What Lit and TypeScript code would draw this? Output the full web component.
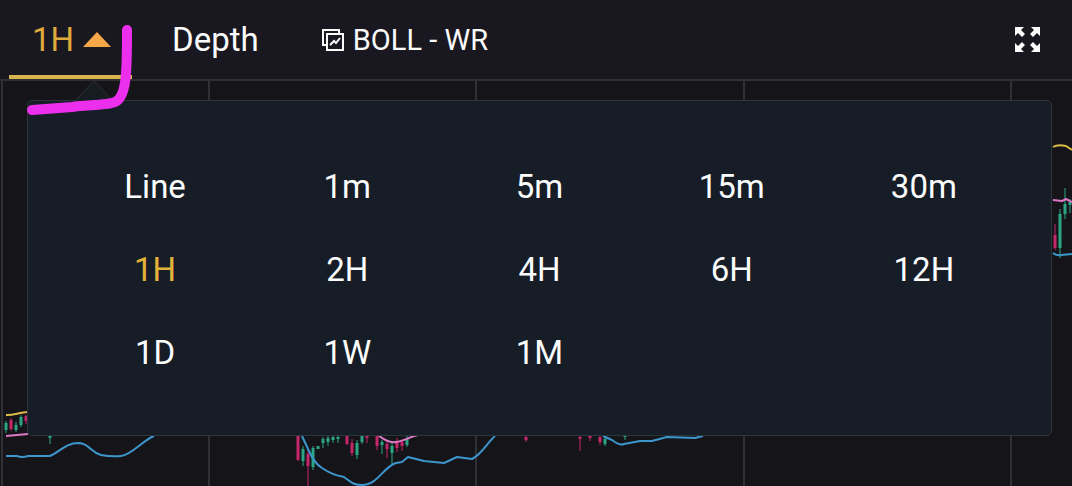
import { LitElement, css, html, svg } from 'lit';
import { customElement, property, state } from 'lit/decorators.js';
import { classMap } from 'lit/directives/class-map.js';

// x, wick top, wick bottom, body top, body bottom, rising
type Candle = [number, number, number, number, number, boolean];

const CANDLES: Candle[] = [
  [6, 421, 433, 423, 430, true],
  [11, 418, 431, 420, 429, false],
  [16, 422, 432, 425, 430, true],
  [21, 415, 427, 417, 425, true],
  [26, 415, 424, 416, 421, false],
  [50, 436, 444, 436, 438, true],
  [298, 436, 461, 436, 460, false],
  [303, 446, 466, 449, 461, true],
  [308, 450, 486, 454, 466, false],
  [313, 446, 470, 448, 467, true],
  [318, 446, 449, 446, 449, true],
  [323, 437, 448, 439, 443, true],
  [328, 436, 446, 438, 442, true],
  [333, 436, 443, 437, 440, true],
  [338, 436, 443, 437, 439, true],
  [347, 436, 445, 436, 444, false],
  [352, 439, 456, 443, 453, false],
  [357, 440, 459, 443, 455, true],
  [362, 436, 444, 436, 442, true],
  [367, 436, 443, 436, 438, false],
  [377, 436, 450, 436, 446, false],
  [382, 440, 454, 442, 445, true],
  [387, 440, 458, 444, 449, false],
  [392, 442, 464, 446, 453, true],
  [397, 438, 452, 441, 448, false],
  [402, 440, 451, 442, 446, false],
  [407, 436, 447, 439, 445, true],
  [526, 436, 442, 437, 440, false],
  [580, 436, 451, 437, 439, false],
  [590, 436, 441, 436, 438, false],
  [600, 436, 445, 437, 442, false],
  [605, 437, 446, 439, 444, true],
  [625, 436, 440, 436, 437, true],
  [1055, 224, 250, 235, 248, false],
  [1060, 209, 258, 214, 248, true],
  [1065, 188, 219, 204, 214, true],
  [1070, 199, 213, 202, 205, true]
];

const GRID_LINES = [2, 209, 476, 744, 1011];

const UPPER_BAND = ['M6 415 C12 416 20 412 28 412', 'M1053 147 C1056 145 1062 145 1066 146 L1072 150'];

const MIDDLE_BAND = [
  'M6 436 L28 434',
  'M378 435 C384 440 390 443 396 442 C404 441 409 437 418 435',
  'M1053 200 L1062 201 L1066 199 L1072 202'
];

const LOWER_BAND = [
  'M6 456 H17 Q22 458 28 456 H50 C60 452 65 443 79 443 C90 444 90 452 101 455 Q111 457 121 456 C132 455 143 440 154 436',
  'M302 436 L309 451 Q314 463 322 468 Q332 475 344 477 C350 481 352 485 362 485 C378 485 383 467 396 463 L402 462 L408 457 L416 459 L424 461 L444 463 L457 457 L472 459 C482 454 487 443 495 436',
  'M603 436 L612 440 Q620 446 624 444 L640 441 H652 L667 437 L695 438 L703 436',
  'M1053 253 Q1057 256 1061 255 L1072 254'
];

const INTERVALS = ['Line', '1m', '5m', '15m', '30m', '1H', '2H', '4H', '6H', '12H', '1D', '1W', '1M'];

@customElement('price-chart')
export class PriceChart extends LitElement {
  static override styles = css`
    :host {
      display: block;
    }

    .plot {
      display: block;
      width: 100%;
      height: auto;
    }

    .grid {
      stroke: #303036;
      stroke-width: 2;
    }

    .band {
      fill: none;
      stroke-width: 2;
      stroke-linejoin: round;
    }

    .upper {
      stroke: #dcba45;
    }

    .middle {
      stroke: #de7ac4;
    }

    .lower {
      stroke: #3d96cb;
    }

    .rise {
      fill: #2ca586;
    }

    .fall {
      fill: #c5276d;
    }
  `;

  override render() {
    return html`
      <svg class="plot" viewBox="0 81 1072 405" role="img" aria-label="Price chart">
        ${GRID_LINES.map((x) => svg`<line class="grid" x1=${x} x2=${x} y1="81" y2="486" />`)}
        ${CANDLES.map(
          ([x, high, low, top, bottom, rising]) => svg`
            <g class=${rising ? 'rise' : 'fall'}>
              <rect x=${x - 0.5} y=${high} width="1" height=${low - high} />
              <rect x=${x - 1.5} y=${top} width="3" height=${bottom - top} />
            </g>`
        )}
        ${this.renderBand('upper', UPPER_BAND)}
        ${this.renderBand('middle', MIDDLE_BAND)}
        ${this.renderBand('lower', LOWER_BAND)}
      </svg>
    `;
  }

  private renderBand(name: string, paths: string[]) {
    return paths.map((d) => svg`<path class="band ${name}" d=${d} />`);
  }
}

@customElement('interval-menu')
export class IntervalMenu extends LitElement {
  static override styles = css`
    :host {
      display: block;
      position: relative;
      padding: 44px 31px 41px;
      border: 1px solid #2a3639;
      border-radius: 5px;
      background: #171d27;
    }

    .caret {
      position: absolute;
      left: 47px;
      bottom: 100%;
      display: block;
    }

    .options {
      display: grid;
      grid-template-columns: repeat(5, 1fr);
      grid-auto-rows: 83px;
    }

    .option {
      padding: 0;
      border: 0;
      background: none;
      color: #fbfcfc;
      font: 400 33px/40px Roboto, 'Liberation Sans', sans-serif;
      cursor: pointer;
    }

    .selected {
      color: #e3b23a;
    }
  `;

  @property() value = '1H';

  override render() {
    return html`
      <svg class="caret" width="38" height="20" viewBox="0 0 38 20" aria-hidden="true">
        <path d="M0 20 L19 0 L38 20 Z" fill="#171b22" />
        <path d="M0 20 L19 0 L38 20" fill="none" stroke="#2e3338" />
      </svg>
      <div class="options">
        ${INTERVALS.map(
          (name) => html`
            <button
              type="button"
              class=${classMap({ option: true, selected: name === this.value })}
              aria-pressed=${name === this.value}
              @click=${() => this.select(name)}
            >${name}</button>`
        )}
      </div>
    `;
  }

  private select(name: string) {
    this.dispatchEvent(new CustomEvent<string>('interval-select', { detail: name }));
  }
}

@customElement('app-root')
export class AppRoot extends LitElement {
  static override styles = css`
    :host {
      display: block;
      position: relative;
      overflow: hidden;
      background: #141419;
      color: #fbfbfb;
      font-family: Roboto, 'Liberation Sans', sans-serif;
    }

    .toolbar {
      display: flex;
      align-items: stretch;
      height: 79px;
      padding: 0 28px 0 9px;
      border-bottom: 2px solid #302f35;
      background: #191820;
    }

    button {
      display: flex;
      align-items: center;
      padding: 0;
      border: 0;
      background: none;
      color: inherit;
      font: 400 33px/40px Roboto, 'Liberation Sans', sans-serif;
      cursor: pointer;
    }

    .interval {
      gap: 9px;
      padding: 4px 21px 0 23px;
      border-bottom: 4px solid #d8b44c;
      color: #dfa93b;
    }

    .depth {
      margin-left: 40px;
    }

    .indicators {
      gap: 8px;
      margin-left: 62px;
      font-size: 29px;
    }

    .expand {
      margin-left: auto;
    }

    .stage {
      position: relative;
    }

    .menu {
      position: absolute;
      top: 19px;
      left: 27px;
      right: 20px;
    }

    .stroke {
      position: absolute;
      top: 20px;
      left: 20px;
      pointer-events: none;
    }
  `;

  @state() private interval = '1H';
  @state() private open = true;

  override render() {
    return html`
      <header class="toolbar">
        <button type="button" class="interval" aria-expanded=${this.open} @click=${this.toggleMenu}>
          ${this.interval}
          <svg width="28" height="15" viewBox="0 0 28 15" aria-hidden="true">
            <path d="M14 0 L28 15 H0 Z" fill="#f6a747" />
          </svg>
        </button>
        <button type="button" class="depth">Depth</button>
        <button type="button" class="indicators">
          <svg width="24" height="24" viewBox="0 0 24 24" fill="none" stroke="currentColor" aria-hidden="true">
            <path d="M18 5 V2 H2 V17 H5" stroke-width="2" />
            <path d="M6 6 H22 V22 H6 Z" stroke-width="2" />
            <path d="M9 17 L13 13 L15 15 L19 10" stroke-width="2" />
          </svg>
          BOLL - WR
        </button>
        <button type="button" class="expand" aria-label="Full screen">
          <svg width="32" height="26" viewBox="0 0 32 26" aria-hidden="true">
            <g fill="currentColor">
              <path d="M3 0 H12 L9 3 L13 7 L10 10 L6 6 L3 9 Z" />
              <path d="M28 0 H19 L22 3 L18 7 L21 10 L25 6 L28 9 Z" />
              <path d="M3 25 H12 L9 22 L13 18 L10 15 L6 19 L3 16 Z" />
              <path d="M28 25 H19 L22 22 L18 18 L21 15 L25 19 L28 16 Z" />
            </g>
          </svg>
        </button>
      </header>
      <main class="stage">
        <price-chart></price-chart>
        ${this.open
          ? html`<interval-menu
              class="menu"
              .value=${this.interval}
              @interval-select=${this.handleSelect}
            ></interval-menu>`
          : null}
      </main>
      <svg class="stroke" width="120" height="100" viewBox="20 20 120 100" aria-hidden="true">
        <path
          d="M127 30 C127 48 127 60 126 73 C125 89 122 99 115 102 C109 105 88 105 72 107 L32 110"
          fill="none"
          stroke="#ec2fec"
          stroke-width="10"
          stroke-linecap="round"
          stroke-linejoin="round"
        />
      </svg>
    `;
  }

  private toggleMenu() {
    this.open = !this.open;
  }

  private handleSelect(event: CustomEvent<string>) {
    this.interval = event.detail;
  }
}
